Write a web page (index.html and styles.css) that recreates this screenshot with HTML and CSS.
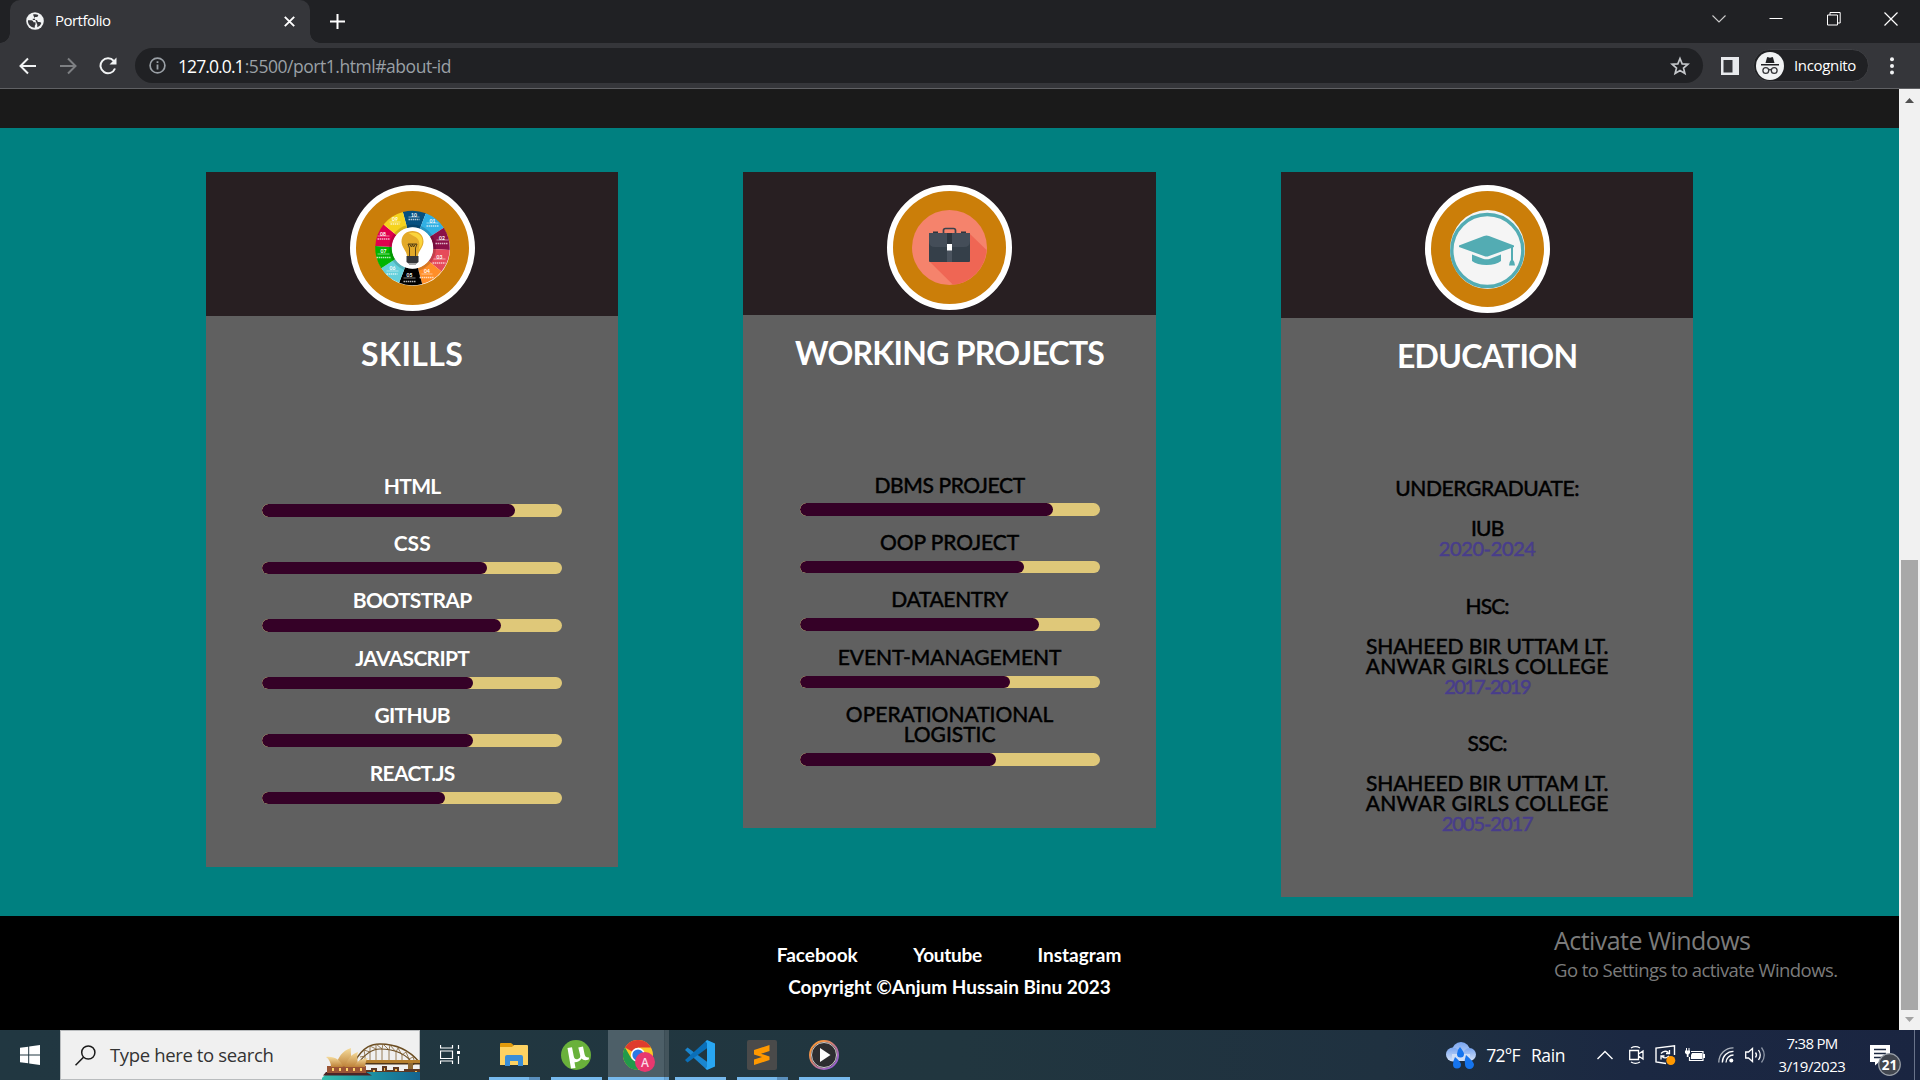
FILE: index.html
```html
<!DOCTYPE html>
<html lang="en">
<head>
<meta charset="utf-8">
<title>Portfolio</title>
<link rel="stylesheet" href="styles.css">
</head>
<body>
<div class="screen">
  <header class="tabstrip">
    <div class="tab">
      <svg class="favicon" width="18" height="18" viewBox="0 0 18 18"><circle cx="9" cy="9" r="8.8" fill="#f1f3f4"/><path d="M2 8.200H5.500Q7.500 8.500 7.500 10.300H9.500V12.500Q8.500 13.500 8.800 15.800C4.500 15.500 1.500 12 2 8.200ZM7 2.500C9 2 11 2.100 12.300 3.100Q12.300 5 10.500 5H8.800V6.800H6.800V8H10.500Q11.800 8.500 11.800 10H13.500Q14.500 10.200 15.300 11C14.600 13 13 14.600 11.300 15.300V12.800" fill="#35363a"/></svg>
      <span class="tab-title">Portfolio</span>
      <svg class="tab-close" width="11" height="11" viewBox="0 0 11 11"><path d="M.8.8 10.200 10.200M10.200.8.8 10.200" stroke="#fff" stroke-width="1.900"/></svg>
    </div>
    <svg class="tab-new" width="15" height="15" viewBox="0 0 15 15"><path d="M7.500 0V15M0 7.500H15" stroke="#fff" stroke-width="2"/></svg>
    <div class="window-controls">
      <svg width="14" height="14" viewBox="0 0 14 14"><path d="M.5 3.500 7 10 13.500 3.500" fill="none" stroke="#ccc" stroke-width="1.100"/></svg>
      <svg width="14" height="14" viewBox="0 0 14 14"><path d="M.5 6.500H13.500" stroke="#fff"/></svg>
      <svg width="14" height="14" viewBox="0 0 14 14"><path d="M.5 3H10.500V13H.5ZM3 3V.5H13.200V11H10.500" fill="none" stroke="#fff"/></svg>
      <svg width="14" height="14" viewBox="0 0 14 14"><path d="M.5.5 13.500 13.500M13.500.5.5 13.500" stroke="#fff" stroke-width="1.200"/></svg>
    </div>
  </header>
  <div class="toolbar">
    <svg class="nav" width="18" height="18" viewBox="0 0 18 18"><path d="M17 9H2M9 1.500 1.500 9 9 16.500" fill="none" stroke="#f1f3f4" stroke-width="2"/></svg>
    <svg class="nav" width="18" height="18" viewBox="0 0 18 18"><path d="M1 9H16M9 1.500 16.500 9 9 16.500" fill="none" stroke="#7e8083" stroke-width="2"/></svg>
    <svg class="nav" width="18" height="18" viewBox="0 0 18 18"><path d="M14.800 4A7.500 7.500 0 1 0 16 11.500" fill="none" stroke="#f1f3f4" stroke-width="2"/><path d="M17.500.5V7.500H10.500Z" fill="#f1f3f4"/></svg>
    <div class="omnibox">
      <svg width="17" height="17" viewBox="0 0 17 17"><circle cx="8.500" cy="8.500" r="7.400" fill="none" stroke="#9aa0a6" stroke-width="1.700"/><path d="M8.500 7.500V12.500M8.500 4.300V6.100" stroke="#9aa0a6" stroke-width="1.800"/></svg>
      <span class="url-host">127.0.0.1</span><span class="url-path">:5500/port1.html#about-id</span>
      <svg class="star" width="20" height="20" viewBox="0 0 24 24"><path d="M12 3 14.600 9.400 21.500 9.900 16.200 14.400 17.900 21.100 12 17.500 6.100 21.100 7.800 14.400 2.500 9.900 9.400 9.400Z" fill="none" stroke="#c4c7ca" stroke-width="2"/></svg>
    </div>
    <svg class="side-panel" width="18" height="18" viewBox="0 0 18 18"><path d="M0 0H18V18H0ZM2.500 3V15.500H11.500V3Z" fill="#e8eaed" fill-rule="evenodd"/></svg>
    <div class="profile">
      <svg width="28" height="28" viewBox="0 0 28 28"><circle cx="14" cy="14" r="14" fill="#f1f3f4"/><path d="M9.500 11 11 5.500Q11.300 4.800 12.200 5.200L14 5.800 15.800 5.200Q16.700 4.800 17 5.500L18.500 11ZM5 12H23V13.500H5Z" fill="#202124"/><g fill="none" stroke="#35363a" stroke-width="1.300"><circle cx="9.800" cy="18.500" r="2.900"/><circle cx="18.200" cy="18.500" r="2.900"/><path d="M12.700 18Q14 17 15.300 18"/></g></svg>
      <span>Incognito</span>
    </div>
    <svg class="kebab" width="4" height="18" viewBox="0 0 4 18"><g fill="#f1f3f4"><circle cx="2" cy="2.300" r="2"/><circle cx="2" cy="8.900" r="2"/><circle cx="2" cy="15.500" r="2"/></g></svg>
  </div>

  <div class="viewport">
    <div class="page">
      <div class="previous-section"></div>
      <main class="cards">
        <section class="card">
          <div class="card-head">
            <div class="badge badge-skills">
              <svg width="75" height="76" viewBox="-37.500 -38 75 76">
                <circle cx=".5" cy=".8" r="37" fill="#fff"/>
                <g fill="none" stroke-width="16.500" transform="rotate(-105)">
                  <circle r="29" pathLength="10" stroke="#05507f" stroke-dasharray="1 9"/>
                  <circle r="29" pathLength="10" stroke="#31b0e4" stroke-dasharray="1 9" stroke-dashoffset="-1"/>
                  <circle r="29" pathLength="10" stroke="#8b1048" stroke-dasharray="1 9" stroke-dashoffset="-2"/>
                  <circle r="29" pathLength="10" stroke="#e64a5a" stroke-dasharray="1 9" stroke-dashoffset="-3"/>
                  <circle r="29" pathLength="10" stroke="#ff8e28" stroke-dasharray="1 9" stroke-dashoffset="-4"/>
                  <circle r="29" pathLength="10" stroke="#000" stroke-dasharray="1 9" stroke-dashoffset="-5"/>
                  <circle r="29" pathLength="10" stroke="#64d0db" stroke-dasharray="1 9" stroke-dashoffset="-6"/>
                  <circle r="29" pathLength="10" stroke="#00b400" stroke-dasharray="1 9" stroke-dashoffset="-7"/>
                  <circle r="29" pathLength="10" stroke="#e0004d" stroke-dasharray="1 9" stroke-dashoffset="-8"/>
                  <circle r="29" pathLength="10" stroke="#f5d31e" stroke-dasharray="1 9" stroke-dashoffset="-9"/>
                </g>
                <circle r="22" fill="none" stroke="#000" stroke-opacity=".15" stroke-width="3"/>
                <g class="wheel-numbers"><text x="1.500" y="-31.500">10</text><text x="20" y="-25.500">01</text><text x="29.500" y="-8.500">02</text><text x="27" y="10.500">03</text><text x="14.500" y="25">04</text><text x="-3" y="29">05</text><text x="-20" y="21.500">06</text><text x="-29" y="5">07</text><text x="-29.500" y="-12.500">08</text><text x="-17.500" y="-27.500">09</text></g>
                <path d="M-4-31H7M14-25H26M24-8H36M21 11H33M9 26H20M-9 30H3M-26 23H-14M-35 6H-23M-35-12H-23M-23-26H-12" stroke="#fff" stroke-opacity=".7" stroke-width=".7"/>
                <path d="M-4-28.500H7M14-22H26M23-4.500H35M20 15H33M7 29.500H21M-9 33.500H3M-26 26H-15M-36 9.500H-22M-35-9H-23M-22-24H-13" stroke="#fff" stroke-opacity=".7" stroke-width="1.300" stroke-dasharray="1.500 .6"/>
                <circle r="20.500" fill="#fff"/>
                <path d="M-5.500 8.500C-5.500 3-11-.5-11-6.500C-11-13-6-17 0-17S11-13 11-6.500C11-.5 5.500 3 5.500 8.500Z" fill="#e3a928"/>
                <path d="M-4-15C3-17 10-14 10-7C10-3 8 0 6 2C8-4 7-10 1-12Z" fill="#fbd43c"/>
                <path d="M-4.500-4H4.500L3 0V8M-4.500-4-3 0V8M-3-4-1-1 0-4 1-1 3-4" fill="none" stroke="#4a3712" stroke-width=".9"/>
                <path d="M-6 8H6V14L4 15.500H-4L-6 14Z" fill="#35363a"/><path d="M-3.500 15.500H3.500V17H-3.500Z" fill="#aaa"/>
              </svg>
            </div>
          </div>
          <div class="card-body">
            <h2 class="t-skills">SKILLS</h2>
            <div class="meters strong">
              <div class="meter"><span class="t-tight">HTML</span><div class="track"><div class="fill" style="width:253px"></div></div></div>
              <div class="meter"><span>CSS</span><div class="track"><div class="fill" style="width:225px"></div></div></div>
              <div class="meter"><span class="t-snug">BOOTSTRAP</span><div class="track"><div class="fill" style="width:239px"></div></div></div>
              <div class="meter"><span class="t-snug">JAVASCRIPT</span><div class="track"><div class="fill" style="width:211px"></div></div></div>
              <div class="meter"><span class="t-tight">GITHUB</span><div class="track"><div class="fill" style="width:211px"></div></div></div>
              <div class="meter"><span class="t-snug">REACT.JS</span><div class="track"><div class="fill" style="width:183px"></div></div></div>
            </div>
          </div>
        </section>

        <section class="card card-projects">
          <div class="card-head">
            <div class="badge">
              <svg width="75" height="75" viewBox="0 0 75 75">
                <circle cx="37.500" cy="37.500" r="37.500" fill="#f5836c"/>
                <path d="M58 24 74.500 40A37.500 37.500 0 0 1 41 74.800L18 52Z" fill="#ef6654"/>
                <path d="M31.500 24V20.500Q31.500 18.500 33.500 18.500H41.500Q43.500 18.500 43.500 20.500V24" fill="none" stroke="#3a424c" stroke-width="1.700"/>
                <path d="M21 23V21.500H26V23ZM49 23V21.500H54V23Z" fill="#2d353e"/>
                <rect x="17" y="23" width="41" height="29" rx="1" fill="#353f49"/>
                <path d="M17 23H58V31Q58 37 52 37H23Q17 37 17 31Z" fill="#444d58"/>
                <path d="M35 23H40V37H35Z" fill="#2d353e"/><path d="M35 40H40V52H35Z" fill="#4a535e"/>
                <rect x="35" y="34" width="5" height="6.500" fill="#fff"/>
              </svg>
            </div>
          </div>
          <div class="card-body">
            <h2 class="t-projects">WORKING PROJECTS</h2>
            <div class="meters medium">
              <div class="meter"><span class="t-near">DBMS PROJECT</span><div class="track"><div class="fill" style="width:253px"></div></div></div>
              <div class="meter"><span class="t-hair">OOP PROJECT</span><div class="track"><div class="fill" style="width:224px"></div></div></div>
              <div class="meter"><span class="t-near">DATAENTRY</span><div class="track"><div class="fill" style="width:239px"></div></div></div>
              <div class="meter"><span class="t-hair">EVENT-MANAGEMENT</span><div class="track"><div class="fill" style="width:210px"></div></div></div>
              <div class="meter"><span>OPERATIONATIONAL LOGISTIC</span><div class="track"><div class="fill" style="width:196px"></div></div></div>
            </div>
          </div>
        </section>

        <section class="card card-education">
          <div class="card-head">
            <div class="badge badge-education">
              <svg width="75" height="79" viewBox="0 0 75 79">
                <ellipse cx="37.500" cy="39.500" rx="37.500" ry="39.500" fill="#f5f5f5"/>
                <ellipse cx="37.300" cy="40.500" rx="35.500" ry="36" fill="none" stroke="#53acb3" stroke-width="3.400"/>
                <path d="M9 35.500 34 26Q36.500 25 39 26L64 35.500V37L39 46Q36.500 47 34 46L9 37Z" fill="#53acb3"/>
                <path d="M22 44.500 33 48.700Q36.500 50 40 48.700L51 44.500V51Q46 55 36.500 55T22 51Z" fill="#53acb3"/>
                <path d="M61 37H63V50Q65 52 65 55.500H59Q59 52 61 50Z" fill="#53acb3"/>
              </svg>
            </div>
          </div>
          <div class="card-body">
            <h2 class="t-education">EDUCATION</h2>
            <div class="schools medium">
              <div class="school"><h3 class="t-near">UNDERGRADUATE:</h3><p class="t-iub">IUB</p><p class="years y-2020">2020-2024</p></div>
              <div class="school"><h3 class="t-hsc">HSC:</h3><p class="t-hair">SHAHEED BIR UTTAM LT.</p><p class="t-wide">ANWAR GIRLS COLLEGE</p><p class="years y-2017">2017-2019</p></div>
              <div class="school"><h3 class="t-snug">SSC:</h3><p class="t-hair">SHAHEED BIR UTTAM LT.</p><p class="t-wide">ANWAR GIRLS COLLEGE</p><p class="years y-2005">2005-2017</p></div>
            </div>
          </div>
        </section>
      </main>
      <footer class="footer">
        <div class="links"><a>Facebook</a><a class="t-youtube">Youtube</a><a>Instagram</a></div>
        <div>Copyright ©Anjum Hussain Binu 2023</div>
      </footer>
    </div>
    <div class="scrollbar">
      <svg width="21" height="21" viewBox="0 0 21 21"><path d="M6 14 10.500 9 15 14Z" fill="#505050"/></svg>
      <div class="thumb"></div>
      <svg width="21" height="20" viewBox="0 0 21 20"><path d="M6 7H15L10.500 12Z" fill="#a3a3a3"/></svg>
    </div>
    <div class="watermark"><div class="wm-title">Activate Windows</div><div class="wm-text">Go to Settings to activate Windows.</div></div>
  </div>

  <div class="taskbar">
    <div class="start"><svg width="20" height="20" viewBox="0 0 20 20"><path d="M0 2.800 8.200 1.700V9.500H0ZM9.200 1.500 20 0V9.500H9.200ZM0 10.500H8.200V18.300L0 17.200ZM9.200 10.500H20V20L9.200 18.500Z" fill="#fff"/></svg></div>
    <div class="search">
      <svg width="21" height="21" viewBox="0 0 21 21"><circle cx="13.300" cy="7.500" r="6.600" fill="none" stroke="#1a1a1a" stroke-width="1.500"/><path d="M8.500 12.300.5 20.300" stroke="#1a1a1a" stroke-width="1.600"/></svg>
      <span>Type here to search</span>
      <svg class="sydney" width="98" height="37" viewBox="0 0 98 37">
        <defs><linearGradient id="sea"><stop offset="0" stop-color="#35bfae"/><stop offset=".55" stop-color="#1c8da0"/><stop offset="1" stop-color="#15638f"/></linearGradient><linearGradient id="shell" x2="0" y2="1"><stop offset="0" stop-color="#f6dc9c"/><stop offset="1" stop-color="#bd8138"/></linearGradient></defs>
        <path d="M33 18C42 3 50 1 58 1C77 1 90 10 98 20" fill="none" stroke="#6b4d22" stroke-width="1.500"/>
        <path d="M35 22C44 9 51 6 58 6C75 6 86 13 92 22" fill="none" stroke="#6b4d22" stroke-width="1.200"/>
        <path d="M38 14 43 13 42 7 48 9 48 3 54 6 54 1 60 6 61 1 67 7 68 2 74 9 76 5 80 12 84 9 87 16 91 14 93 20M43 12V20M48 9V20M54 6V20M60 6V20M67 7V20M74 9V20M80 12V20M87 16V20" fill="none" stroke="#806133" stroke-width=".8"/>
        <path d="M40 17H98V20H40Z" fill="#b57f2e"/><path d="M40 20H98V21.500H40Z" fill="#4e3519"/><path d="M86 20H91V30H86Z" fill="#8d6631"/>
        <path d="M44 31V27H49V25H55V28H60V23H65V27H71V24H77V28H82V26H98V31Z" fill="#5d3823"/>
        <path d="M51 27H53V29H51ZM62 25H63V28H62ZM73 26H75V28H73ZM93 28H95V30H93Z" fill="#f7b848"/>
        <path d="M0 37V35L6 29H98V37H0Z" fill="url(#sea)"/><path d="M4 29H44L50 32.500H1Z" fill="#4c2425"/>
        <path d="M5 23H44V30H5Z" fill="#9a5434"/><path d="M10 25H12V28H10ZM17 25H19V28H17ZM24 25H26V28H24ZM31 25H33V28H31ZM38 25H40V28H38Z" fill="#ffd36b"/>
        <path d="M14 23C16 14 20 8 29 5C28 11 31 17 29 24Z" fill="url(#shell)"/><path d="M23 24C25 17 29 11 36 9C34 15 37 19 35 24Z" fill="url(#shell)"/><path d="M4 14C12 13 19 17 21 24H9C9 20 7 16 4 14Z" fill="url(#shell)"/><path d="M32 24C34 19 38 16 46 15C43 18 44 21 43 24Z" fill="url(#shell)"/>
      </svg>
    </div>
    <div class="task-view"><svg width="20" height="19" viewBox="0 0 20 19"><path d="M.5 0V3H12.500V0M.5 6H12.500V13.500H.5ZM.5 19V16H12.500V19M18.500 0V4M18.500 11V19" fill="none" stroke="#fff" stroke-width="1.200"/><path d="M17 6H20V9H17Z" fill="#fff"/></svg></div>
    <div class="apps">
      <div class="app"><svg width="30" height="30" viewBox="0 0 30 30"><path d="M1 4Q1 3 2 3H12L14.500 5V8H1Z" fill="#e09a0c"/><path d="M1 7H13L15 5H28Q29 5 29 6V25H1Z" fill="#fdd262"/><path d="M6 26V17Q6 15 8 15H22Q24 15 24 17V26H19V21H11V26Z" fill="#3a8ed8"/></svg><i class="run split"></i></div>
      <div class="app"><svg width="30" height="30" viewBox="0 0 30 30"><circle cx="15" cy="15" r="15" fill="#69b13b"/><path d="M6.500 8 11 7.200 12.700 16Q13.500 20 17 19Q20 18 19 14.500L17.300 7.500 22 6.600 23.500 14Q24.300 18 28 17.500L27.800 19.500Q23 21.500 20.500 18.500Q18 22.500 13.500 22.300L14.500 28 10 28.500Z" fill="#fff"/></svg><i class="run"></i></div>
      <div class="app active"><svg width="34" height="32" viewBox="0 0 34 32"><circle cx="15" cy="15" r="15" fill="#fbc727"/><path d="M15 15 2 7.500A15 15 0 0 1 28 7.500H15Z" fill="#df3c2e"/><path d="M15 15 8.500 18.700 2 7.500A15 15 0 0 0 15 30L22 18.700Z" fill="#229a4a"/><circle cx="15" cy="15" r="7.200" fill="#fff"/><circle cx="15" cy="15" r="5.600" fill="#2b78e4"/><circle cx="22" cy="22" r="10" fill="#e8386f"/><text class="chrome-user" x="22" y="26.500">A</text></svg><i class="run"></i></div>
      <div class="app"><svg width="30" height="30" viewBox="0 0 30 30"><path d="M0 10 2.500 7.500 23 22.500V29L21 29Z" fill="#1a86cf"/><path d="M0 20 2.500 22.500 23 7.500V1L21 1Z" fill="#0a6fb8"/><path d="M22 0 30 3.500V26.500L22 30 20.500 28.500 22 27V3L20.500 1.500Z" fill="#28a6f2"/></svg><i class="run"></i></div>
      <div class="app"><svg width="30" height="30" viewBox="0 0 30 30"><rect width="30" height="30" rx="2" fill="#4a4a4a"/><path d="M7 10 22.500 5V11L14 13.700 22.500 16.500V20L7 25V19.500L15 17 7 14.500Z" fill="#ff9800"/></svg><i class="run split"></i></div>
      <div class="app"><svg width="30" height="30" viewBox="0 0 30 30"><defs><linearGradient id="ring" x2="1" y2="1"><stop offset=".2" stop-color="#f59442"/><stop offset=".8" stop-color="#9b62c8"/></linearGradient></defs><circle cx="15" cy="15" r="14" fill="#2d2d30" stroke="url(#ring)" stroke-width="2"/><circle cx="15" cy="15" r="12.500" fill="none" stroke="#ddd" stroke-width=".9"/><path d="M11 8 21.500 15 11 22Z" fill="#fff"/></svg><i class="run"></i></div>
    </div>
    <div class="tray">
      <svg class="weather" width="30" height="27" viewBox="0 0 30 27"><defs><linearGradient id="cloud" x2="0" y2="1"><stop offset="0" stop-color="#79a5f0"/><stop offset="1" stop-color="#d6e3f8"/></linearGradient></defs><circle cx="15" cy="9" r="9" fill="url(#cloud)"/><circle cx="7" cy="12.500" r="7" fill="url(#cloud)"/><circle cx="23.500" cy="12.500" r="6.500" fill="url(#cloud)"/><path d="M6 12H24V19H6Z" fill="#cfdef7"/><path d="M14 5Q18 10 18 12A3.500 3.500 0 0 1 11 12Q11 8 14 5ZM9 15Q15 20 15 22.500A4 4 0 0 1 7 22.500Q7 19 9 15ZM20 13Q28 20 28 22.500A4.500 4.500 0 0 1 19 22.500Q18 18 20 13Z" fill="#1574ee"/></svg>
      <span class="temp">72°F</span><span class="cond">Rain</span>
      <svg class="chevron" width="16" height="10" viewBox="0 0 16 10"><path d="M.5 9 8 1.500 15.500 9" fill="none" stroke="#fff" stroke-width="1.400"/></svg>
      <svg class="meet" width="15" height="18" viewBox="0 0 15 18"><path d="M.7 4.500H9.500V13.500H.7ZM9.500 8 14 5V13L9.500 10M2 2Q6.500-.6 11 2M2 16Q6.500 18.600 11 16" fill="none" stroke="#fff" stroke-width="1.300"/></svg>
      <svg class="update" width="21" height="20" viewBox="0 0 21 20"><path d="M11 18.500 1 17V3L19.500.8V10" fill="none" stroke="#fff" stroke-width="1.400"/><path d="M6 8.500Q9.500 4.500 13.500 7.500M14.500 5V8.500H11M14 11Q10.500 14.500 7 11.500M6 14.500V11H9.500" fill="none" stroke="#fff" stroke-width="1.300"/><circle cx="15.800" cy="15.500" r="4.500" fill="#ff9800"/></svg>
      <svg class="battery" width="20" height="14" viewBox="0 0 20 14"><path d="M6 3.500H18V12.500H4.500V9" fill="none" stroke="#fff" stroke-width="1.200"/><path d="M7 5H17V11H6V7ZM18 6H20V10H18ZM0 2.500H5V5L3.500 6.500V9H1.800V6.500L0 5ZM1 0H2V3H1ZM3.500 0H4.500V3H3.500Z" fill="#fff"/></svg>
      <svg class="wifi" width="17" height="16" viewBox="0 0 17 16"><g fill="none" stroke="#fff" stroke-width="1.300"><path d="M.8 15.500A14.500 14.500 0 0 1 15.500.8" stroke="#aeb5bf"/><path d="M4.300 15.500A11.200 11.200 0 0 1 15.500 4.300M8 15.500A7.500 7.500 0 0 1 15.500 8"/></g><circle cx="13.300" cy="13.500" r="2" fill="#fff"/></svg>
      <svg class="volume" width="21" height="18" viewBox="0 0 21 18"><path d="M.7 6H3.500L7.500 2.500V15.500L3.500 12H.7ZM10.500 6.500Q12.500 9 10.500 11.500M13.500 4Q17 9 13.500 14" fill="none" stroke="#fff" stroke-width="1.300"/><path d="M16.500 1.500Q22 9 16.500 16.500" fill="none" stroke="#8c95a5" stroke-width="1.300"/></svg>
      <div class="clock"><span class="time">7:38 PM</span><span class="date">3/19/2023</span></div>
      <div class="notifications"><svg width="32" height="32" viewBox="0 0 32 32"><path d="M0 1H20V18H9L5 21.500V18H0Z" fill="#fff"/><path d="M4 5.500H16M4 9.500H16M4 13.500H12" stroke="#1c2840" stroke-width="1.300"/><circle cx="19.500" cy="20.500" r="10.800" fill="#424750" stroke="#9aa0a8" stroke-width="1.200"/><text class="count" x="19.500" y="25.500">21</text></svg></div>
      <div class="peek"></div>
    </div>
  </div>
</div>
</body>
</html>
```
FILE: styles.css
```css
* { box-sizing: border-box; }
html, body { margin: 0; height: 100%; overflow: hidden; }
body { font-family: "Open Sans", "Noto Sans", sans-serif; background: #000; }
svg { display: block; flex: none; }
h2, h3, p { margin: 0; font-weight: inherit; font-size: inherit; }

.screen { width: 1920px; height: 1080px; display: flex; flex-direction: column; }

/* Browser frame */
.tabstrip { height: 43px; background: #202124; display: flex; align-items: flex-start; padding-left: 10px; }
.tab { position: relative; width: 300px; height: 43px; background: #35363a; border-radius: 10px 10px 0 0; display: flex; padding: 0 15px 0 16px; }
.tab::before, .tab::after { content: ""; position: absolute; bottom: 0; width: 10px; height: 10px; }
.tab::before { left: -10px; background: radial-gradient(circle at 0 0, transparent 9.5px, #35363a 10px); }
.tab::after { right: -10px; background: radial-gradient(circle at 100% 0, transparent 9.5px, #35363a 10px); }
.favicon { margin-top: 12px; }
.tab-title { margin-left: 11px; font-size: 15px; line-height: 20px; margin-top: 10px; letter-spacing: -.53px; color: #fff; flex: 1; }
.tab-close { margin-top: 16px; }
.tab-new { margin: 14px 0 0 20px; }
.window-controls { margin-left: auto; margin-top: 12px; margin-right: 22px; display: flex; gap: 43.500px; }

.toolbar { height: 46px; background: #35363a; border-bottom: 1px solid #606164; display: flex; align-items: center; padding: 1px 26px 1px 19px; }
.nav { margin-right: 22px; }
.omnibox { width: 1568px; height: 35px; border-radius: 18px; background: #202124; display: flex; align-items: center; padding: 0 13px 0 14px; margin-left: -4px; font-size: 17.500px; line-height: 24px; }
.url-host { margin-left: 12px; color: #fff; letter-spacing: -.9px; }
.url-path { color: #9aa0a6; letter-spacing: -.46px; margin-left: 1px; }
.star { margin-left: auto; }
.side-panel { margin-left: 18px; }
.profile { margin-left: 14px; width: 116px; height: 33px; border-radius: 17px; background: #202124; border: 1px solid #3e3f43; display: flex; align-items: center; padding-left: 2px; font-size: 15px; letter-spacing: -.34px; color: #fff; gap: 10px; }
.profile span { line-height: 20px; margin-top: -2px; }
.kebab { margin-left: auto; }

/* Web page */
.viewport { position: relative; height: 941px; display: flex; }
.page { width: 1899px; font-family: Lato, "Open Sans", sans-serif; }
.previous-section { height: 39px; background: #1a1a1a; }
.cards { height: 788px; background: #008080; display: flex; align-items: flex-start; gap: 125px; padding: 44px 0 0 206px; }
.card { width: 412.400px; background: #606060; }
.card-head { background: #281f22; padding: 13px 0 5px; display: flex; justify-content: center; }
.badge { width: 125px; height: 125px; border: 6px solid #fff; border-radius: 50%; background: #cb7e09; display: flex; align-items: center; justify-content: center; }
.badge-skills { height: 126px; }
.badge-education { height: 128px; }
.wheel-numbers { font: 700 5px Lato, sans-serif; fill: #fff; text-anchor: middle; }
.card-body { padding: 22px 56.200px 63px; text-align: center; }
.card-projects .card-body { padding-bottom: 62px; }
.card-education { margin-left: .2px; }
.card-education .card-body { padding-bottom: 64px; }
.card-body h2 { font-size: 32px; font-weight: 700; line-height: 32px; color: #fff; margin: 0 -40px 105.500px; }
.meters { display: flex; flex-direction: column; gap: 16.300px; font-size: 21px; line-height: 20px; }
.strong { font-weight: 700; color: #fff; }
.medium { -webkit-text-stroke: .5px currentColor; }
.meter { display: flex; flex-direction: column; gap: 8.700px; }
.track { width: 300px; height: 12.500px; border-radius: 7px; background: #dfc879; overflow: hidden; }
.fill { height: 100%; border-radius: 7px; background: #350127; }
.schools { display: flex; flex-direction: column; gap: 37.500px; font-size: 21px; line-height: 20px; padding-top: .6px; }
.school h3 { margin-bottom: 20px; }
.years { color: #483d8b; font-size: 20px; }

.footer { height: 114px; background: #000; color: #fff; padding-top: 23px; font-size: 19px; font-weight: 700; line-height: 32px; text-align: center; }
.links { display: flex; justify-content: center; gap: 55.500px; margin-right: 1px; }

/* Letter fitting */
.t-skills { letter-spacing: .4px; }
.t-projects { letter-spacing: -.75px; }
.t-education { letter-spacing: -.7px; }
.t-tight { letter-spacing: -.7px; }
.t-snug { letter-spacing: -.7px; }
.t-near { letter-spacing: -.36px; }
.t-hair { letter-spacing: -.06px; }
.t-wide { letter-spacing: .3px; }
.t-iub { letter-spacing: -.8px; }
.t-hsc { letter-spacing: -.9px; }
.t-youtube { letter-spacing: -.25px; }
.y-2020 { letter-spacing: -.37px; }
.y-2017 { letter-spacing: -1.600px; }
.y-2005 { letter-spacing: -1.030px; }

.scrollbar { width: 21px; background: #f1f1f1; display: flex; flex-direction: column; }
.thumb { width: 17px; height: 450px; margin: auto 0 0 2px; background: #a8a8a8; }
.watermark { position: absolute; left: 1554px; top: 834px; color: #7b7b7b; white-space: nowrap; }
.wm-title { font-size: 25px; line-height: 34px; letter-spacing: -.55px; }
.wm-text { font-size: 18.500px; line-height: 25px; letter-spacing: -.56px; }

/* Taskbar */
.taskbar { height: 50px; background: linear-gradient(90deg, #213741, #21363f 50%, #1f3140 72%, #1b2842 85%, #1a2541); display: flex; color: #fff; }
.start { width: 60px; padding: 15px 0 0 20px; }
.search { width: 360px; background: #f0f0f0; border: 1px solid #b9bcbe; display: flex; align-items: center; padding-left: 14px; color: #333; font-size: 18.500px; letter-spacing: -.36px; }
.search span { margin: -1px 0 0 14px; line-height: 25px; }
.sydney { margin: 12px -1px 0 auto; }
.task-view { width: 64px; padding: 15px 0 0 20px; }
.apps { display: flex; gap: 1px; }
.app { width: 61px; height: 50px; display: flex; flex-direction: column; align-items: center; justify-content: space-between; padding-top: 10px; }
.app svg { margin-left: -2px; }
.run { width: 51px; height: 3px; background: #76b9ed; }
.split { background: linear-gradient(90deg, #76b9ed 40px, #5a8fbc 40px); }
.active { background: linear-gradient(90deg, #4d5f68 56px, #33454f 56px, #43545c 57px); }
.app.active svg { margin-left: 3px; }
.active .run { width: 61px; background: linear-gradient(90deg, #76b9ed 56px, #5a8fbc 56px, #6aa6d6 57px); }
.chrome-user { font: 600 12px "Open Sans", sans-serif; fill: #fbdbe6; text-anchor: middle; }
.tray { margin-left: auto; display: flex; align-items: center; font-size: 17.500px; line-height: 24px; }
.temp { margin-left: 10px; letter-spacing: -.7px; }
.cond { margin-left: 11px; letter-spacing: -.4px; }
.chevron { margin-left: 32px; }
.meet { margin-left: 16px; }
.update { margin-left: 11px; }
.battery { margin-left: 9px; }
.wifi { margin-left: 13px; }
.volume { margin-left: 10px; }
.clock { width: 70px; margin-left: 11px; margin-right: 1px; display: flex; flex-direction: column; align-items: center; font-size: 15px; line-height: 23px; }
.time { letter-spacing: -.7px; }
.date { letter-spacing: -.45px; }
.notifications { margin: 10px 0 0 22px; }
.count { font: 700 13.500px "Open Sans", sans-serif; fill: #fff; text-anchor: middle; }
.peek { width: 6px; height: 50px; border-left: 1px solid #69738a; margin-left: 12px; }
```
